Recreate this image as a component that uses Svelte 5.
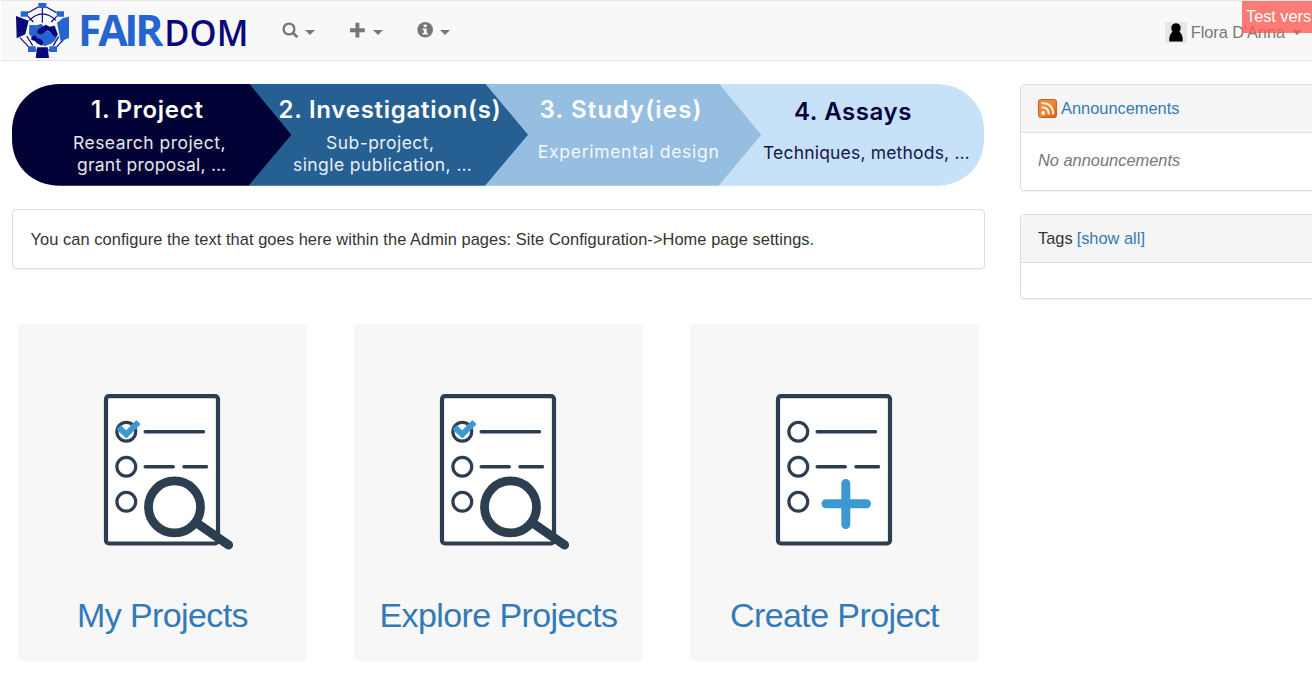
<script>
  const steps = [
    { fill: '#000235', color: '#fff', d: 'M48 0H237.5L279.3 50.7L236.5 101.7H48C20 101.7 0 82 0 55V47C0 20 20 0 48 0Z',
      lines: [['1. Project', 79, 33.5, 112, 1], ['Research project,', 61, 64.7, 152.5, 0], ['grant proposal, …', 65, 87.3, 149, 0]] },
    { fill: '#265f92', color: '#fff', d: 'M236 0H473.5L516 50.7L473 101.7H236Z',
      lines: [['2. Investigation(s)', 266.6, 34, 222, 1], ['Sub-project,', 314, 64.7, 108, 0], ['single publication, …', 281, 87.3, 178.5, 0]] },
    { fill: '#95bee1', color: '#fff', d: 'M472 0H707.2L749.2 50.7L706.5 101.7H472Z',
      lines: [['3. Study(ies)', 527.5, 34, 162, 1], ['Experimental design', 525.8, 74, 181, 0]] },
    { fill: '#c6e1f8', color: '#020238', d: 'M705 0H924C952 0 972 20 972 47V55C972 82 952 101.7 924 101.7H705Z',
      lines: [['4. Assays', 782, 36, 117.5, 1], ['Techniques, methods, …', 751, 75, 206.5, 0]] }
  ];
  const cards = [
    { title: 'My Projects', kind: 'search' },
    { title: 'Explore Projects', kind: 'search' },
    { title: 'Create Project', kind: 'add' }
  ];
</script>

<div class="page">
  <header>
    <svg class="logo" width="254" height="60" viewBox="0 0 762 180" aria-label="FAIRDOM">
      <g fill="none" stroke="#08087c" stroke-width="3.5">
        <path d="M84 38L115 21M139 21L170 38M127 24V68M84 49L100 66M170 49L154 66M88 61Q127 22 168 61" />
        <path d="M60 113L88 143M196 113L168 143M80 108L98 137M176 110L160 137M106 150H150" />
      </g>
      <g fill="#2465d0">
        <path d="M115 9H139V24H115ZM62 34H84V50H62ZM170 34H192V50H170ZM84 139H107V156H84ZM148 139H171V156H148Z" />
        <path d="M171 68L189 54L207 50V114L182 124Z" />
        <path d="M88 75L111 76L124 71L142 92L172 108L164 123L151 132L133 139L121 127L104 120L87 102Z" />
      </g>
      <g fill="#08087c">
        <path d="M48 48L86 62L76 103L50 115Z" />
        <path d="M111 96L116 87L137 74L149 80L164 77L174 105L164 111L151 96L140 91L128 101Q116 107 111 96Z" />
        <path d="M94 112L104 106L112 115L121 117L131 127L126 137L113 131L103 122L94 120Z" />
        <path d="M111 142H143L147 174H107Z" />
      </g>
      <text x="234" y="137" class="fair" textLength="256">FAIR</text>
      <text x="493" y="137" class="dom" textLength="252" lengthAdjust="spacingAndGlyphs">DOM</text>
    </svg>
    <nav>
      <a class="item" href="#search" aria-label="Search">
        <svg width="18" height="18" viewBox="0 0 18 18"><circle cx="7" cy="7" r="5.4" fill="none" stroke="#777" stroke-width="2.3" /><path d="M11 11L15.4 15.2" stroke="#777" stroke-width="2.8" /></svg>
        <i class="caret"></i>
      </a>
      <a class="item" href="#create" aria-label="Create">
        <svg width="18" height="18" viewBox="0 0 18 18"><path d="M7.4 .8V15.6M0 8.3H14.8" stroke="#777" stroke-width="3.9" /></svg>
        <i class="caret"></i>
      </a>
      <a class="item" href="#info" aria-label="Information">
        <svg width="18" height="18" viewBox="0 0 18 18"><circle cx="8.2" cy="7.8" r="7.8" fill="#777" /><path d="M6.7 2.4H9.7V4.9H6.7ZM5.5 6.4H9.7V10.9H11V12.6H5.4V10.9H6.8V8H5.5Z" fill="#f8f8f8" /></svg>
        <i class="caret"></i>
      </a>
    </nav>
    <div class="user">
      <svg width="22" height="21" viewBox="0 0 22 21"><path fill="#e7e7e7" d="M0 0H22V21H0Z" /><path d="M4.3 19.5C4 15 5 12 7.5 9.8C5 6 6.5 1.3 11 1.3S17 6 14.5 9.8C17 12 18 15 17.7 19.5Z" /></svg>
      <span>Flora D'Anna</span><i class="caret"></i>
    </div>
    <div class="ribbon">Test vers</div>
  </header>

  <div class="content">
    <main>
      <svg class="banner" width="972" height="102" viewBox="0 0 972 102">
        {#each [...steps].reverse() as s}
          <path d={s.d} fill={s.fill} />
        {/each}
        {#each steps as s}
          {#each s.lines as [t, x, y, w, head]}
            <text {x} {y} textLength={w} fill={s.color} class={head ? 'head' : 'cap'}>{t}</text>
          {/each}
        {/each}
      </svg>
      <section class="panel notice">You can configure the text that goes here within the Admin pages: Site Configuration-&gt;Home page settings.</section>
      <div class="cards">
        {#each cards as c}
          <a class="card" href="#projects">
            <svg width="134" height="160" viewBox="0 0 134 160" fill="none" stroke="#2c3e50" stroke-linecap="round">
              <rect x="4" y="4.2" width="112" height="147.3" rx="3" fill="#fff" stroke-width="4.2" />
              <g stroke-width="3.2">
                <circle cx="24.3" cy="39.8" r="9.4" /><circle cx="24.3" cy="74.8" r="9.4" /><circle cx="24.3" cy="109.8" r="9.4" />
                <path d="M43.2 39.8H101.5M43.2 74.8H71.2M82 74.8H104.5" stroke-width="3.5" />
              </g>
              {#if c.kind === 'search'}
                <path d="M16.5 35.2L24.3 42.4L36.5 30.2" stroke="#3c97d3" stroke-width="6" stroke-linecap="butt" />
                <circle cx="72.5" cy="114.9" r="26" fill="#fff" stroke-width="8.8" />
                <path d="M96.5 132.2L126.6 153" stroke-width="9" />
              {:else}
                <path d="M71.8 91.5V132.5M52 111.7H92.5" stroke="#3c97d3" stroke-width="9" />
              {/if}
            </svg>
            <h2>{c.title}</h2>
          </a>
        {/each}
      </div>
    </main>
    <aside>
      <section class="panel">
        <h3>
          <svg width="19" height="19" viewBox="0 0 19 19">
            <defs><linearGradient id="rss" x2="1" y2="1"><stop stop-color="#e98a45" /><stop offset=".5" stop-color="#ef8535" /><stop offset="1" stop-color="#dc5612" /></linearGradient></defs>
            <rect x=".5" y=".5" width="18" height="18" rx="2" fill="url(#rss)" stroke="#d95b1b" />
            <circle cx="5.2" cy="14" r="1.9" fill="#fff" />
            <path d="M3.5 8.3Q10.8 8.3 10.8 15.6M3.5 4Q15.2 4 15.2 15.6" fill="none" stroke="#fff1e2" stroke-width="2.1" />
          </svg>
          <a href="#announcements">Announcements</a>
        </h3>
        <p>No announcements</p>
      </section>
      <section class="panel tags">
        <h3><span>Tags</span><a href="#tags">[show all]</a></h3>
        <p></p>
      </section>
    </aside>
  </div>
</div>

<style>
  :global(body) { margin: 0; background: #fff; overflow: hidden; }
  .page { width: 1312px; height: 674px; overflow: hidden; color: #333; font: 16.4px/23px "Liberation Sans", Arial, sans-serif; }
  a { color: #337ab7; text-decoration: none; }
  header { position: relative; box-sizing: border-box; height: 61px; margin-left: 1px; display: flex; background: #f8f8f8; border: solid #e7e7e7; border-width: 1px 0; }
  .logo { margin: -1px 0 0 -1px; flex: none; }
  .fair, .dom { font-family: "Open Sans", sans-serif; }
  .fair { font-size: 128px; font-weight: 700; fill: #2465d0; }
  .dom { font-size: 108px; font-weight: 600; fill: #08087c; }
  nav { display: flex; gap: 34px; margin: 21px 0 0 28.3px; }
  .item { display: flex; width: 33.5px; height: 18px; gap: 5px; }
  .caret { flex: none; width: 0; height: 0; border: 5px solid transparent; border-top-color: #777; border-bottom: 0; }
  .item .caret { margin-top: 8px; }
  .user { display: flex; align-items: center; height: 21px; margin: 21px 10px 0 auto; color: #777; }
  .user svg { margin: -1px 1px 0 -1px; }
  .user span { margin: 0 7px 0 3px; letter-spacing: -.07px; }
  .ribbon { position: absolute; right: 0; top: 0; width: 66px; height: 32px; padding-left: 4px; overflow: hidden; white-space: nowrap; line-height: 31px; letter-spacing: -.05px; background: rgba(255, 90, 82, .8); color: #fff; }
  .content { display: flex; gap: 35px; padding: 23px 0 0 12px; }
  main { flex: none; width: 973px; }
  .banner { display: block; }
  .banner text { font-family: Inter, sans-serif; }
  .banner .head { font-size: 24px; font-weight: 600; }
  .banner .cap { font-size: 17.5px; opacity: .9; }
  .panel { box-sizing: border-box; border: 1px solid #ddd; border-radius: 4px; box-shadow: 0 1px 1px rgba(0, 0, 0, .05); overflow: hidden; }
  .notice { height: 60px; margin-top: 23px; padding: 18px 17.5px; white-space: nowrap; letter-spacing: .072px; }
  .cards { display: flex; gap: 47px; margin: 55px 0 0 6px; }
  .card { display: flex; flex-direction: column; align-items: center; width: 289px; height: 337px; border-radius: 5px; background: #f7f7f7; }
  .card svg { margin: 68px 0 0 13px; }
  .card h2 { margin: 43px 0 0; font-size: 34px; line-height: 40px; font-weight: 400; white-space: nowrap; letter-spacing: -.6px; }
  aside { flex: none; width: 330px; }
  h3 { display: flex; align-items: center; gap: 4px; box-sizing: border-box; height: 48px; margin: 0; padding: 0 17px; font-size: inherit; font-weight: 400; background: #f5f5f5; border-bottom: 1px solid #ddd; }
  p { margin: 0; padding: 16px 17px; color: #777; font-style: italic; }
  aside .panel { height: 107px; }
  aside .tags { height: 85px; margin-top: 23px; }
</style>
